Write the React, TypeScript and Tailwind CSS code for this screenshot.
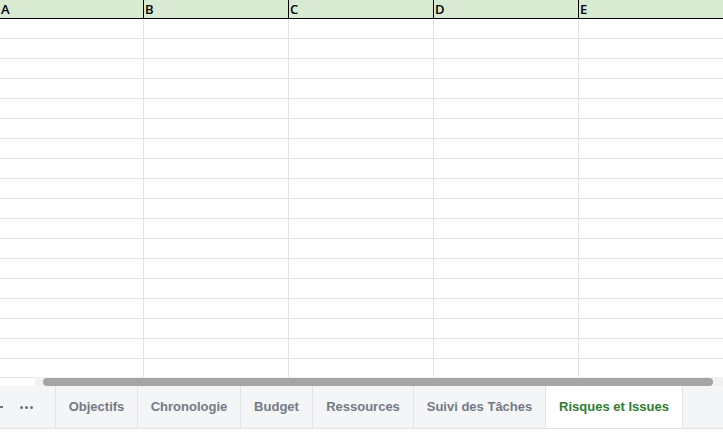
import React from "react";

const cols = ["A", "B", "C", "D", "E"];
const tabs: { t: string; w: string }[] = [
  { t: "Objectifs", w: "w-[83px]" },
  { t: "Chronologie", w: "w-[103px]" },
  { t: "Budget", w: "w-[72px]" },
  { t: "Ressources", w: "w-[101px]" },
  { t: "Suivi des Tâches", w: "w-[132px]" },
  { t: "Risques et Issues", w: "w-[137px]" },
];

export default function App() {
  const rows = Array.from({ length: 18 });
  return (
    <div className="w-[723px] h-[432px] overflow-hidden bg-white flex flex-col" style={{ fontFamily: "'Liberation Sans', Arial, sans-serif" }}>
      {/* header */}
      <div className="flex h-[19px] shrink-0 bg-[#d9ead3] border-b border-black">
        {cols.map((c, i) => (
          <div
            key={c}
            className={`${i === 0 ? "w-[144px]" : "w-[145px]"} shrink-0 border-r border-black pl-[1px] text-[13px] leading-[18px] text-black font-semibold`}
            style={{ fontFamily: "'Open Sans', sans-serif" }}
          >
            {c}
          </div>
        ))}
      </div>
      {/* body */}
      <div className="h-[358px] shrink-0 overflow-hidden">
        {rows.map((_, r) => (
          <div key={r} className="flex h-[20px] border-b border-[#e2e2e2]">
            {cols.map((c, i) => (
              <div key={c} className={`${i === 0 ? "w-[144px]" : "w-[145px]"} shrink-0 border-r border-[#e2e2e2]`} />
            ))}
          </div>
        ))}
      </div>
      {/* scrollbar */}
      <div className="flex h-[9px] shrink-0">
        <div className="w-[35px] border-t border-[#e2e2e2] bg-white" />
        <div className="flex-1 bg-[#f1f1f1] flex items-center pl-[8px] pr-[10px]">
          <div className="h-[8px] w-full rounded-full bg-[#a5a5a5]" />
        </div>
      </div>
      {/* tab bar */}
      <div className="flex h-[43px] shrink-0 bg-[#f4f5f7] border-b border-[#e3e4e6]">
        <div className="w-[55px] shrink-0 flex items-center relative">
          <div className="absolute left-0 top-[20px] w-[3px] h-[2px] bg-[#6b7280]" />
          <div className="ml-[20px] flex gap-[2px]">
            <span className="w-[3px] h-[3px] rounded-full bg-[#6b7280]" />
            <span className="w-[3px] h-[3px] rounded-full bg-[#6b7280]" />
            <span className="w-[3px] h-[3px] rounded-full bg-[#6b7280]" />
          </div>
        </div>
        {tabs.map(({ t, w }, i) => {
          const active = i === tabs.length - 1;
          return (
            <div
              key={t}
              className={`${w} shrink-0 flex items-center justify-center whitespace-nowrap border-r border-[#e3e4e6] ${i === 0 ? "border-l" : ""} ${
                active ? "bg-white text-[#2e7d32]" : "text-[#737a85]"
              } text-[13px] font-bold`}
            >
              {t}
            </div>
          );
        })}
      </div>
      <div className="flex-1 bg-white" />
    </div>
  );
}
